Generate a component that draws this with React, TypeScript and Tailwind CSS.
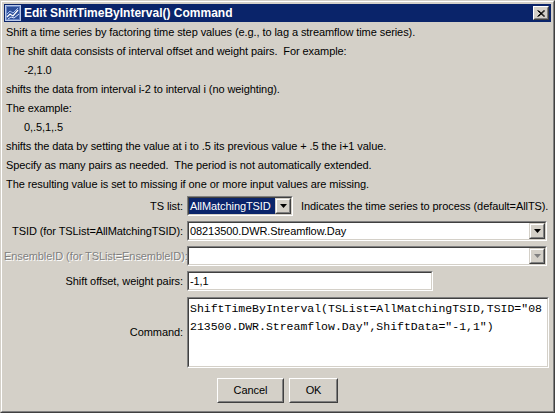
import React from "react";

const Sunken = ({ className = "", innerClass = "", children }: { className?: string; innerClass?: string; children?: React.ReactNode }) => (
  <div className={`border border-t-[#808080] border-l-[#808080] border-b-white border-r-white ${className}`}>
    <div className={`h-full border border-t-[#404040] border-l-[#404040] border-b-[#d4d0c8] border-r-[#d4d0c8] ${innerClass}`}>{children}</div>
  </div>
);

const Arrow = ({ disabled = false }: { disabled?: boolean }) => (
  <div className="w-[16px] h-full border border-t-[#d4d0c8] border-l-[#d4d0c8] border-b-[#404040] border-r-[#404040] bg-[#d4d0c8]">
    <div className="h-full border border-t-white border-l-white border-b-[#808080] border-r-[#808080] flex items-center justify-center">
      <svg width="7" height="4" viewBox="0 0 7 4">
        <polygon points="0,0 7,0 3.5,4" fill={disabled ? "#808080" : "#000"} />
      </svg>
    </div>
  </div>
);

const Combo = ({ text, selected = false, disabled = false, className = "" }: { text: string; selected?: boolean; disabled?: boolean; className?: string }) => (
  <Sunken className={`h-[20px] ${className}`} innerClass={`flex bg-white`}>
    <div className={`flex-1 flex items-center pl-[1px] ${selected ? "bg-[#0a246a] text-white" : "text-black"} whitespace-nowrap overflow-hidden`}>{text}</div>
    <Arrow disabled={disabled} />
  </Sunken>
);

const Btn = ({ label, w }: { label: string; w: string }) => (
  <div className={`${w} h-[25px] border border-t-white border-l-white border-b-[#404040] border-r-[#404040] bg-[#d4d0c8]`}>
    <div className="h-full border border-t-[#d4d0c8] border-l-[#d4d0c8] border-b-[#808080] border-r-[#808080] flex items-center justify-center">
      {label}
    </div>
  </div>
);

export default function App() {
  const lines: [string, boolean][] = [
    ["Shift a time series by factoring time step values (e.g., to lag a streamflow time series).", false],
    ["The shift data consists of interval offset and weight pairs.  For example:", false],
    ["-2,1.0", true],
    ["shifts the data from interval i-2 to interval i (no weighting).", false],
    ["The example:", false],
    ["0,.5,1,.5", true],
    ["shifts the data by setting the value at i to .5 its previous value + .5 the i+1 value.", false],
    ["Specify as many pairs as needed.  The period is not automatically extended.", false],
    ["The resulting value is set to missing if one or more input values are missing.", false],
  ];
  return (
    <div className="w-[555px] h-[413px] bg-[#d4d0c8] border border-t-[#d4d0c8] border-l-[#d4d0c8] border-b-[#404040] border-r-[#404040] text-[11px] text-black [font-family:'Liberation_Sans',Arial,sans-serif]">
      <div className="h-full border border-t-white border-l-white border-b-[#808080] border-r-[#808080] p-[2px] flex flex-col">
        {/* title bar */}
        <div className="h-[18px] bg-[#0a246a] flex items-center pl-[1px] pr-[2px]">
          <svg width="16" height="16" viewBox="0 0 16 16" className="shrink-0">
            <rect x="0.5" y="0.5" width="15" height="15" fill="#2d4f9a" stroke="#b8c8e8" />
            <rect x="1.5" y="1.5" width="13" height="13" fill="none" stroke="#6a88c8" />
            <polyline points="2,12 5,9 8,11 13,5" fill="none" stroke="#ffffff" strokeWidth="1.3" />
            <polyline points="2,9 5,6 8,8 13,3" fill="none" stroke="#a8c0f0" strokeWidth="1" />
            <polyline points="3,14 6,12 9,13 14,9" fill="none" stroke="#d8e4ff" strokeWidth="1" />
          </svg>
          <div className="ml-[3px] text-white font-bold text-[12px] leading-none flex-1 whitespace-nowrap">Edit ShiftTimeByInterval() Command</div>
          <div className="w-[16px] h-[14px] border border-t-white border-l-white border-b-[#404040] border-r-[#404040] bg-[#d4d0c8]">
            <div className="h-full border border-t-[#d4d0c8] border-l-[#d4d0c8] border-b-[#808080] border-r-[#808080] flex items-center justify-center">
              <svg width="8" height="7" viewBox="0 0 8 7">
                <path d="M0.5 0.5 L7 6.5 M1.5 0.5 L8 6.5 M7 0.5 L0.5 6.5 M8 0.5 L1.5 6.5" stroke="#000" strokeWidth="1" fill="none" />
              </svg>
            </div>
          </div>
        </div>
        {/* body */}
        <div className="flex-1 flex flex-col pt-[1px] pr-[2px] tracking-[-0.08px]">
          <div className="flex flex-col pl-[2px]">
            {lines.map(([t, indent], i) => (
              <div key={i} className={`h-[19px] leading-[19px] whitespace-pre ${indent ? "pl-[18px]" : ""}`}>{t}</div>
            ))}
          </div>
          <div className="mt-[2px] grid grid-cols-[179px_1fr] gap-x-[4px] gap-y-[5px] items-center">
            <div className="text-right whitespace-nowrap">TS list:</div>
            <div className="flex items-center gap-[8px]">
              <Combo text="AllMatchingTSID" selected className="w-[106px]" />
              <div className="whitespace-nowrap">Indicates the time series to process (default=AllTS).</div>
            </div>
            <div className="text-right whitespace-nowrap">TSID (for TSList=AllMatchingTSID):</div>
            <Combo text="08213500.DWR.Streamflow.Day" className="mr-[2px]" />
            <div className="text-right whitespace-nowrap text-[#808080] [text-shadow:1px_1px_0_#ffffff]">EnsembleID (for TSList=EnsembleID):</div>
            <Combo text="" disabled className="mr-[2px]" />
            <div className="text-right whitespace-nowrap">Shift offset, weight pairs:</div>
            <Sunken className="h-[20px] w-[246px]" innerClass="bg-white flex items-center pl-[1px]">-1,1</Sunken>
            <div className="text-right whitespace-nowrap">Command:</div>
            <Sunken className="h-[71px] mt-[1px]" innerClass="bg-white pl-[1px] pt-[1px]">
              <div className="[font-family:'Liberation_Mono',monospace] text-[11.5px] leading-[18px] whitespace-pre tracking-normal">
                <div>ShiftTimeByInterval(TSList=AllMatchingTSID,TSID="08</div>
                <div>213500.DWR.Streamflow.Day",ShiftData="-1,1")</div>
              </div>
            </Sunken>
          </div>
          <div className="mt-[10px] flex justify-center gap-[5px] pl-[2px]">
            <Btn label="Cancel" w="w-[67px]" />
            <Btn label="OK" w="w-[49px]" />
          </div>
        </div>
      </div>
    </div>
  );
}
